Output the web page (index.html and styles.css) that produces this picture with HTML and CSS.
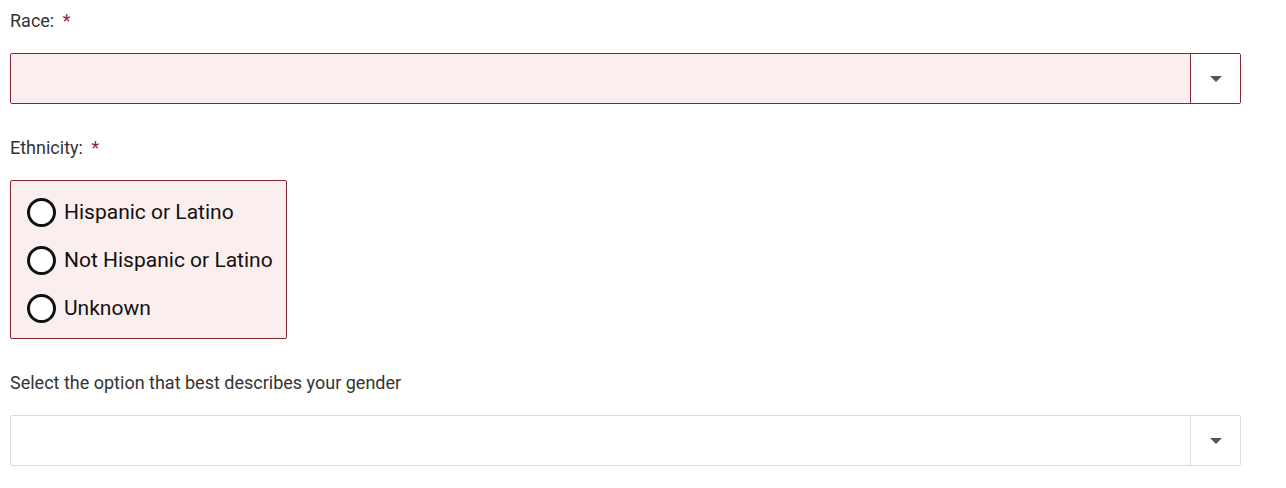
FILE: index.html
```html
<!DOCTYPE html>
<html lang="en">
<head>
    <meta charset="UTF-8">
    <meta name="viewport" content="width=device-width, initial-scale=1.0">
    <title>Demographics</title>
    <link rel="stylesheet" href="styles.css">
</head>

<body>
    <form class="form">
        <div class="field">
            <label class="label" for="race">Race: <span class="req">*</span></label>
            <div class="select invalid">
                <div class="select-value" id="race"></div>
                <div class="select-arrow"><span class="caret"></span></div>
            </div>
        </div>

        <div class="field">
            <div class="label">Ethnicity: <span class="req">*</span></div>
            <div class="radio-group invalid">
                <label class="radio"><span class="circle"></span>Hispanic or Latino</label>
                <label class="radio"><span class="circle"></span>Not Hispanic or Latino</label>
                <label class="radio"><span class="circle"></span>Unknown</label>
            </div>
        </div>

        <div class="field">
            <label class="label" for="gender">Select the option that best describes your gender</label>
            <div class="select">
                <div class="select-value" id="gender"></div>
                <div class="select-arrow"><span class="caret"></span></div>
            </div>
        </div>
    </form>
</body>
</html>
```

FILE: styles.css
```css
* {
    font-family: Roboto, 'Liberation Sans', sans-serif;
    box-sizing: border-box;
}
body {
    margin: 0;
    padding: 0;
    background-color: #fff;
}
.form {
    display: flex;
    flex-direction: column;
    gap: 32px;
    padding: 9px 45px 0 10px;
}
.field {
    display: flex;
    flex-direction: column;
}
.label {
    display: block;
    font-size: 18px;
    line-height: 24px;
    color: #333;
    margin-bottom: 20px;
}
.req {
    color: #8a2a2e;
    margin-left: 4px;
}
.select {
    display: flex;
    height: 51px;
    border: 1px solid #dcdcdc;
    border-radius: 2px;
    background-color: #fff;
}
.select-value {
    flex: 1;
}
.select-arrow {
    width: 50px;
    display: flex;
    align-items: center;
    justify-content: center;
    border-left: 1px solid #dcdcdc;
    background-color: #fff;
}
.caret {
    width: 0;
    height: 0;
    border-left: 6px solid transparent;
    border-right: 6px solid transparent;
    border-top: 6px solid #555;
}
.select.invalid {
    border-color: #862633;
}
.select.invalid .select-value {
    background-color: #fbeeee;
}
.select.invalid .select-arrow {
    border-left-color: #862633;
}
.radio-group {
    display: inline-flex;
    flex-direction: column;
    align-self: flex-start;
    padding: 7px 13px 6px 16px;
    border: 1px solid #dcdcdc;
    border-radius: 2px;
}
.radio-group.invalid {
    border-color: #862633;
    background-color: #fbeeee;
}
.radio {
    display: flex;
    align-items: center;
    gap: 8px;
    height: 48px;
    font-size: 21px;
    color: #111;
    cursor: pointer;
}
.circle {
    width: 29px;
    height: 29px;
    border: 3px solid #111;
    border-radius: 50%;
    background-color: #fff;
    flex-shrink: 0;
}
```
